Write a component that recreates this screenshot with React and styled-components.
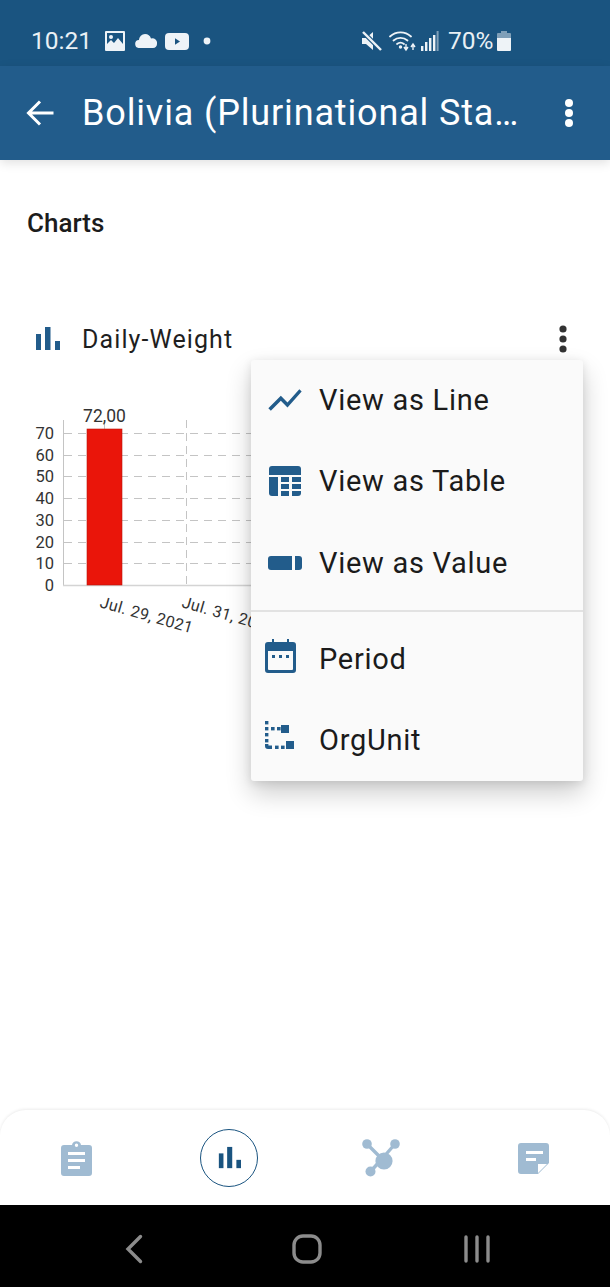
import React from "react";
import styled, { createGlobalStyle } from "styled-components";

const GlobalStyle = createGlobalStyle`
  html, body {
    margin: 0;
    padding: 0;
    background: #fff;
    font-family: Roboto, "Noto Sans", sans-serif;
  }
  * { box-sizing: border-box; }
`;

const Screen = styled.div`
  width: 610px;
  height: 1287px;
  display: flex;
  flex-direction: column;
  overflow: hidden;
  background: #fff;
`;

const StatusBar = styled.div`
  height: 66px;
  flex: none;
  display: flex;
  align-items: center;
  padding: 16px 0 0 31px;
  color: #e9f0f5;
  background: #1a5480;
  font-size: 24.5px;
`;

const StatusText = styled.span`
  line-height: 30px;
  margin-left: ${(p) => p.$before || 0}px;
`;

const StatusIcon = styled.svg`
  display: block;
  flex: none;
  margin-left: ${(p) => p.$before || 0}px;
`;

const AppBar = styled.header`
  height: 94px;
  flex: none;
  display: flex;
  align-items: center;
  padding: 0 0 0 26px;
  color: #fff;
  background: #225c8b;
  box-shadow: 0 3px 10px rgba(0, 0, 0, 0.12);
  position: relative;
  z-index: 2;
`;

const Title = styled.h1`
  margin: 0 0 0 27px;
  width: 443px;
  font-size: 36px;
  font-weight: 400;
  letter-spacing: 0.85px;
  white-space: nowrap;
  overflow: hidden;
  text-overflow: ellipsis;
`;

const Kebab = styled.svg`
  display: block;
  flex: none;
  margin-left: ${(p) => p.$before || 0}px;
`;

const Content = styled.main`
  flex: 1;
  position: relative;
  padding-top: 48px;
`;

const SectionTitle = styled.h2`
  margin: 0 0 0 27px;
  font-size: 26px;
  line-height: 30px;
  font-weight: 500;
  color: #1c1c1c;
`;

const ChartRow = styled.div`
  height: 44px;
  margin-top: 79px;
  padding-left: 34px;
  display: flex;
  align-items: center;
  color: #1f1f1f;
`;

const ChartName = styled.span`
  margin-left: 22px;
  width: 476px;
  font-size: 25px;
  letter-spacing: 1.1px;
`;

const ChartSvg = styled.svg`
  display: block;
  margin: 39px 0 0 30px;
`;

const Menu = styled.div`
  position: absolute;
  top: 200px;
  left: 251px;
  width: 332px;
  height: 421px;
  background: #fafafa;
  border-radius: 3px;
  box-shadow: 0 12px 26px rgba(0, 0, 0, 0.2), 0 2px 10px rgba(0, 0, 0, 0.1);
`;

const MenuItem = styled.div`
  height: 81px;
  display: flex;
  align-items: center;
  padding-bottom: ${(p) => p.$lift || 0}px;
  font-size: 29px;
  letter-spacing: 0.72px;
  color: #1b1b1b;
`;

const MenuIcon = styled.span`
  width: 68px;
  flex: none;
  display: flex;
  justify-content: center;
  padding-right: ${(p) => p.$shift || 0}px;
  padding-bottom: ${(p) => p.$up || 0}px;
`;

const Divider = styled.div`
  height: 2px;
  margin: 7px 0 6px;
  background: #e2e2e2;
`;

const BottomNav = styled.nav`
  height: 95px;
  flex: none;
  display: grid;
  grid-template-columns: repeat(4, 1fr);
  align-items: center;
  justify-items: center;
  padding-top: 1px;
  background: #fff;
  border-radius: 26px 26px 0 0;
  box-shadow: 0 -1px 3px rgba(0, 0, 0, 0.08);
`;

const NavCircle = styled.div`
  width: 58px;
  height: 58px;
  border-radius: 50%;
  border: 1.5px solid #1a5480;
  display: flex;
  align-items: center;
  justify-content: center;
`;

const SystemNav = styled.div`
  height: 82px;
  flex: none;
  display: grid;
  grid-template-columns: repeat(3, auto);
  justify-content: start;
  align-items: center;
  padding: 5px 0 0 124px;
  background: #000;
  position: relative;
  z-index: 1;
`;

const SysButton = styled.svg`
  display: block;
  margin-right: ${(p) => p.$after || 0}px;
`;

const BLUE = "#225c8b";
const PALE = "#a0bbd2";
const ICON = "#eef3f7";

const BarsIcon = ({ size = 26, color = BLUE }) => (
  <svg width={size} height={size} viewBox="0 0 26 26" style={{ display: "block", flex: "none" }}>
    <rect x="2" y="8" width="5" height="16" fill={color} />
    <rect x="11" y="1" width="5.5" height="23" fill={color} />
    <rect x="21" y="15" width="5" height="9" fill={color} />
  </svg>
);

const DotsIcon = ({ color, r, size, before }) => (
  <Kebab $before={before} width={size} height={size * 3} viewBox="0 0 10 30">
    <circle cx="5" cy="5" r={r} fill={color} />
    <circle cx="5" cy="15" r={r} fill={color} />
    <circle cx="5" cy="25" r={r} fill={color} />
  </Kebab>
);

function Chart() {
  const ticks = [
    [70, 433],
    [60, 455],
    [50, 476],
    [40, 498],
    [30, 520],
    [20, 542],
    [10, 563],
    [0, 585],
  ];
  return (
    <ChartSvg width="530" height="240" viewBox="30 400 530 240" fontFamily="Roboto, sans-serif">
      {ticks.slice(0, 7).map(([v, y]) => (
        <line key={v} x1="64" x2="560" y1={y + 0.5} y2={y + 0.5} stroke="#c4c4c4" strokeDasharray="8 6" />
      ))}
      <line x1="186.5" x2="186.5" y1="420" y2="585" stroke="#c4c4c4" strokeDasharray="8 5" />
      <line x1="63.5" x2="63.5" y1="420" y2="586" stroke="#c4c4c4" />
      <line x1="63" x2="560" y1="585.5" y2="585.5" stroke="#d4d4d4" strokeWidth="1.5" />
      <line x1="104.5" x2="104.5" y1="423" y2="429" stroke="#c4c4c4" />
      <rect x="87" y="429" width="35" height="156" fill="#ea150a" stroke="#b8170c" strokeWidth="0.6" />
      {ticks.map(([v, y]) => (
        <text key={v} x="54" y={y + 5.5} fontSize="16.5" textAnchor="end" fill="#333">
          {v}
        </text>
      ))}
      <text x="104.5" y="422" fontSize="17.5" textAnchor="middle" fill="#333">
        72,00
      </text>
      <text x="99" y="607" fontSize="16" fill="#333" transform="rotate(16 99 607)" letterSpacing="0.4">
        Jul. 29, 2021
      </text>
      <text x="181" y="607" fontSize="16" fill="#333" transform="rotate(16 181 607)" letterSpacing="0.4">
        Jul. 31, 2021
      </text>
    </ChartSvg>
  );
}

export default function App() {
  return (
    <Screen>
      <GlobalStyle />
      <StatusBar>
        <StatusText>10:21</StatusText>
        {/* picture */}
        <StatusIcon $before={13} width="20" height="20" viewBox="0 0 20 20">
          <path
            fillRule="evenodd"
            d="M1 0h18a1 1 0 0 1 1 1v18a1 1 0 0 1-1 1H1a1 1 0 0 1-1-1V1a1 1 0 0 1 1-1zm1 2v11l4-4 3 3 4-5 5 6V2z"
            fill={ICON}
          />
          <circle cx="6" cy="6" r="2" fill={ICON} />
        </StatusIcon>
        {/* cloud */}
        <StatusIcon $before={10} width="22" height="14" viewBox="0 0 22 14">
          <path
            d="M4.5 14a4 4 0 0 1-.6-8A6.5 6.5 0 0 1 10 0a6.5 6.5 0 0 1 6 4.5A4.8 4.8 0 0 1 22 10c0 2.2-1.5 4-4 4z"
            fill={ICON}
          />
        </StatusIcon>
        {/* video */}
        <StatusIcon $before={8} width="24" height="17" viewBox="0 0 24 17">
          <rect width="24" height="17" rx="4" fill={ICON} />
          <path d="M10 5.2l5 3.3-5 3.3z" fill="#1a5480" />
        </StatusIcon>
        <StatusIcon $before={14} width="8" height="8" viewBox="0 0 8 8">
          <circle cx="4" cy="4" r="3.4" fill={ICON} />
        </StatusIcon>
        {/* mute */}
        <StatusIcon $before={151} width="20" height="20" viewBox="0 0 20 20">
          <path d="M0 7h4l7-6v18l-7-6H0z" fill={ICON} />
          <path d="M1 1l18 18" stroke="#1a5480" strokeWidth="4.5" />
          <path d="M1 1l18 18" stroke={ICON} strokeWidth="2.4" />
        </StatusIcon>
        {/* wifi */}
        <StatusIcon $before={7} width="27" height="22" viewBox="0 0 27 22">
          <g fill="none" stroke={ICON} strokeWidth="1.8" strokeLinecap="round">
            <path d="M1 6.5C7 1 16 1 22 6.5" />
            <path d="M4.5 10.5C8.5 7 14.5 7 18.5 10.5" />
            <path d="M8 14c2-1.6 5-1.6 7 0" />
          </g>
          <circle cx="11.5" cy="17" r="1.7" fill={ICON} />
          <path d="M17 14v5m-2-2l2 3 2-3M24 20v-5m-2 2l2-3 2 3" fill="none" stroke={ICON} strokeWidth="1.4" />
        </StatusIcon>
        {/* signal */}
        <StatusIcon $before={5} width="18" height="20" viewBox="0 0 18 20">
          <rect x="0" y="15" width="2.4" height="5" fill={ICON} />
          <rect x="4" y="11" width="2.4" height="9" fill={ICON} />
          <rect x="8" y="7" width="2.4" height="13" fill={ICON} />
          <rect x="12" y="4" width="2.4" height="16" fill={ICON} />
          <rect x="15.6" y="0" width="2" height="20" fill="#7f9fb8" />
        </StatusIcon>
        <StatusText $before={9}>70%</StatusText>
        {/* battery */}
        <StatusIcon $before={3} width="14" height="20" viewBox="0 0 14 20">
          <path d="M4 0h6v2h3a1 1 0 0 1 1 1v4H0V3a1 1 0 0 1 1-1h3z" fill="#7f9fb8" />
          <path d="M0 7h14v12a1 1 0 0 1-1 1H1a1 1 0 0 1-1-1z" fill={ICON} />
        </StatusIcon>
      </StatusBar>

      <AppBar>
        <svg width="29" height="28" viewBox="0 0 29 28" style={{ display: "block", flex: "none" }}>
          <path d="M27.5 14H3M14 2.5L2.5 14 14 25.5" fill="none" stroke="#fff" strokeWidth="3" />
        </svg>
        <Title>Bolivia (Plurinational States of)</Title>
        <DotsIcon color="#fff" r="4" size={10} before={39} />
      </AppBar>

      <Content>
        <SectionTitle>Charts</SectionTitle>
        <ChartRow>
          <BarsIcon />
          <ChartName>Daily-Weight</ChartName>
          <DotsIcon color="#333" r="3.6" size={10} />
        </ChartRow>
        <Chart />

        <Menu>
          <MenuItem $lift={2}>
            <MenuIcon>
              <svg width="40" height="40" viewBox="0 0 24 24">
                <path
                  d="M3.5 18.49l6-6.01 4 4L22 6.92l-1.41-1.41-7.09 7.97-4-4L2 16.99z"
                  fill={BLUE}
                />
              </svg>
            </MenuIcon>
            View as Line
          </MenuItem>
          <MenuItem $lift={2}>
            <MenuIcon>
              <svg width="32" height="30" viewBox="0 0 32 30">
                <path d="M3 0h26a3 3 0 0 1 3 3v6H0V3a3 3 0 0 1 3-3z" fill={BLUE} />
                <path d="M0 11h9v19H3a3 3 0 0 1-3-3z" fill={BLUE} />
                <rect x="12" y="11" width="8" height="5" fill={BLUE} />
                <rect x="23" y="11" width="9" height="5" fill={BLUE} />
                <rect x="12" y="18" width="8" height="5" fill={BLUE} />
                <rect x="23" y="18" width="9" height="5" fill={BLUE} />
                <rect x="12" y="25" width="8" height="5" fill={BLUE} />
                <path d="M23 25h9v2a3 3 0 0 1-3 3h-6z" fill={BLUE} />
              </svg>
            </MenuIcon>
            View as Table
          </MenuItem>
          <MenuItem>
            <MenuIcon>
              <svg width="34" height="14" viewBox="0 0 34 14">
                <path d="M3 0h21v14H3a3 3 0 0 1-3-3V3a3 3 0 0 1 3-3z" fill={BLUE} />
                <path d="M27 0h4a3 3 0 0 1 3 3v8a3 3 0 0 1-3 3h-4z" fill={BLUE} />
              </svg>
            </MenuIcon>
            View as Value
          </MenuItem>
          <Divider />
          <MenuItem>
            <MenuIcon $shift={10} $up={6}>
              <svg width="31" height="34" viewBox="0 0 31 34">
                <path
                  fillRule="evenodd"
                  d="M7 0h2v3h13V0h2v3h4a3 3 0 0 1 3 3v25a3 3 0 0 1-3 3H3a3 3 0 0 1-3-3V6a3 3 0 0 1 3-3h4zM3 12v18a1 1 0 0 0 1 1h23a1 1 0 0 0 1-1V12z"
                  fill={BLUE}
                />
                <rect x="7" y="16" width="3" height="3" fill={BLUE} />
                <rect x="14" y="16" width="3" height="3" fill={BLUE} />
                <rect x="21" y="16" width="3" height="3" fill={BLUE} />
              </svg>
            </MenuIcon>
            Period
          </MenuItem>
          <MenuItem>
            <MenuIcon $shift={10} $up={8}>
              <svg width="30" height="29" viewBox="0 0 30 29">
                <rect x="0" y="0" width="3.4" height="3.4" fill={BLUE} />
                <rect x="0" y="6" width="3.4" height="3.4" fill={BLUE} />
                <rect x="0" y="12" width="3.4" height="3.4" fill={BLUE} />
                <rect x="0" y="18" width="3.4" height="3.4" fill={BLUE} />
                <path d="M0 23h3.4v1.6H7V28H3a3 3 0 0 1-3-3z" fill={BLUE} />
                <rect x="6" y="6" width="3.6" height="3.4" fill={BLUE} />
                <rect x="12" y="6" width="3.6" height="3.4" fill={BLUE} />
                <rect x="16" y="4" width="8" height="8" fill={BLUE} />
                <rect x="10" y="24.6" width="3.6" height="3.4" fill={BLUE} />
                <rect x="16" y="24.6" width="3.6" height="3.4" fill={BLUE} />
                <rect x="21" y="20" width="8" height="8" fill={BLUE} />
              </svg>
            </MenuIcon>
            OrgUnit
          </MenuItem>
        </Menu>
      </Content>

      <BottomNav>
        <svg width="31" height="35" viewBox="0 0 31 35">
          <path
            fillRule="evenodd"
            d="M11 4a4.6 4.6 0 0 1 9 0h8a3 3 0 0 1 3 3v25a3 3 0 0 1-3 3H3a3 3 0 0 1-3-3V7a3 3 0 0 1 3-3zm4.5-1.5a1.7 1.7 0 1 0 0 3.4 1.7 1.7 0 0 0 0-3.4zM7 11v3h17v-3zm0 7v3h17v-3zm0 7v3h12v-3z"
            fill={PALE}
          />
        </svg>
        <NavCircle>
          <BarsIcon size={24} color="#1a5480" />
        </NavCircle>
        <svg width="38" height="38" viewBox="0 0 38 38">
          <g stroke={PALE} strokeWidth="3.4">
            <path d="M5 5l16 16M33 5L19 21M8 33l11-12" />
          </g>
          <circle cx="5" cy="5" r="4.8" fill={PALE} />
          <circle cx="33" cy="5" r="4.8" fill={PALE} />
          <circle cx="8.5" cy="32.5" r="5" fill={PALE} />
          <circle cx="22" cy="22" r="8.6" fill={PALE} />
        </svg>
        <svg width="31" height="31" viewBox="0 0 31 31">
          <path
            fillRule="evenodd"
            d="M3 0h25a3 3 0 0 1 3 3v17L20 31H3a3 3 0 0 1-3-3V3a3 3 0 0 1 3-3zm5 8v3h17V8zm0 7v3h10v-3zm12 6v9l9-9z"
            fill={PALE}
          />
        </svg>
      </BottomNav>

      <SystemNav>
        <SysButton $after={148} width="20" height="30" viewBox="0 0 20 30">
          <path d="M16.5 2.5L4 15l12.5 12.5" fill="none" stroke="#8c8c8c" strokeWidth="3.4" strokeLinecap="round" />
        </SysButton>
        <SysButton $after={141} width="30" height="30" viewBox="0 0 30 30">
          <rect x="2" y="2" width="26" height="26" rx="9" fill="none" stroke="#8c8c8c" strokeWidth="3.4" />
        </SysButton>
        <SysButton width="28" height="30" viewBox="0 0 28 30">
          <path d="M3 3v24M14 3v24M25 3v24" stroke="#8c8c8c" strokeWidth="3.4" strokeLinecap="round" />
        </SysButton>
      </SystemNav>
    </Screen>
  );
}
